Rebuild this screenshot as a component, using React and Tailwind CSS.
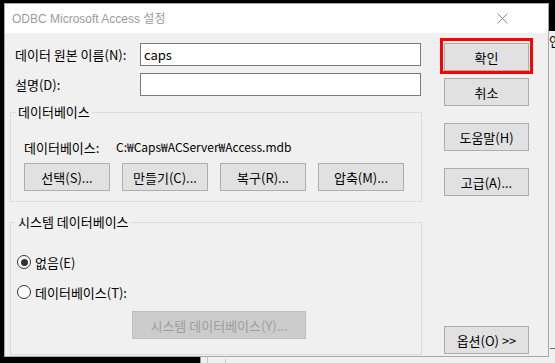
import React from "react";

const font = "font-['Noto_Sans_CJK_KR',sans-serif]";

function Btn({ children, className = "", disabled = false }) {
  return (
    <div
      className={
        "h-[28px] flex items-center justify-center border text-[13px] leading-none " +
        (disabled
          ? "bg-[#cccccc] border-[#bfbfbf] text-[#9d9d9d] "
          : "bg-[#e1e1e1] border-[#adadad] text-black ") +
        className
      }
    >
      {children}
    </div>
  );
}

function Radio({ checked, label }) {
  return (
    <div className="flex items-center gap-[4px] h-[16px]">
      <div className="w-[14px] h-[14px] rounded-full border border-[#333] bg-white flex items-center justify-center">
        {checked && <div className="w-[7px] h-[7px] rounded-full bg-[#333]" />}
      </div>
      <span className="text-[13px] leading-none">{label}</span>
    </div>
  );
}

export default function App() {
  return (
    <div className={"relative w-[555px] h-[363px] bg-black overflow-hidden " + font}>
      {/* background window behind dialog */}
      <div className="absolute left-[200px] top-[31px] right-0 bottom-0 bg-[#f0f0f0] border-l border-[#9a9a9a]">
        <div className="absolute left-[348px] top-[3px] text-[13px] leading-none text-black">연</div>
        <div className="absolute left-[349px] right-0 top-[317px] h-px bg-[#6d6d7a]" />
        <div className="absolute left-[6px] top-[320px] bottom-0 w-px bg-[#c8c8c8]" />
        <div className="absolute left-[24px] top-[328px] bottom-0 w-px bg-[#c8c8c8]" />
      </div>

      {/* dialog */}
      <div className="absolute left-[4px] top-[3px] w-[545px] h-[354px] border border-[#a8a8a8] bg-[#f0f0f0] flex flex-col text-black">
        {/* title bar */}
        <div className="h-[29px] bg-white flex items-center justify-between pl-[7px] pr-[40px] shrink-0">
          <span className="font-['Liberation_Sans','Noto_Sans_CJK_KR',sans-serif] text-[12px] text-[#9b9b9b] leading-none">
            ODBC Microsoft Access 설정
          </span>
          <svg width="11" height="11" viewBox="0 0 11 11" className="text-[#8a8a8a]">
            <path d="M0.5 0.5 L10.5 10.5 M10.5 0.5 L0.5 10.5" stroke="currentColor" strokeWidth="1" />
          </svg>
        </div>

        {/* body */}
        <div className="flex-1 flex pl-[5px] pb-[1px]">
          {/* left column */}
          <div className="w-[412px] flex flex-col pt-[10px]">
            <div className="flex items-center h-[23px]">
              <span className="w-[130px] pl-[5px] text-[13px] leading-none">데이터 원본 이름(N):</span>
              <div className="w-[281px] h-[23px] bg-white border border-[#7a7a7a] flex items-center pl-[3px] text-[13px] leading-none">
                caps
              </div>
            </div>
            <div className="flex items-center h-[23px] mt-[7px]">
              <span className="w-[130px] pl-[5px] text-[13px] leading-none">설명(D):</span>
              <div className="w-[281px] h-[23px] bg-white border border-[#7a7a7a]" />
            </div>

            {/* group box 1 */}
            <div className="relative mt-[16px] h-[90px] border border-[#dcdcdc] pl-[13px] pt-[26px]">
              <span className="absolute left-[5px] top-[-8px] bg-[#f0f0f0] px-[2px] text-[13px] leading-[14px]">
                데이터베이스
              </span>
              <div className="flex items-center h-[16px] text-[13px] leading-none">
                <span className="w-[92px]">데이터베이스:</span>
                <span className="text-[12px]">C:₩Caps₩ACServer₩Access.mdb</span>
              </div>
              <div className="flex gap-[12px] mt-[8px]">
                <Btn className="w-[86px] h-[27px]">선택(S)...</Btn>
                <Btn className="w-[86px] h-[27px]">만들기(C)...</Btn>
                <Btn className="w-[86px] h-[27px]">복구(R)...</Btn>
                <Btn className="w-[86px] h-[27px]">압축(M)...</Btn>
              </div>
            </div>

            {/* group box 2 */}
            <div className="relative mt-[20px] flex-1 border border-[#dcdcdc] pl-[6px] pt-[31px]">
              <span className="absolute left-[5px] top-[-8px] bg-[#f0f0f0] px-[2px] text-[13px] leading-[14px]">
                시스템 데이터베이스
              </span>
              <Radio checked label="없음(E)" />
              <div className="mt-[14px]">
                <Radio label="데이터베이스(T):" />
              </div>
              <div className="pl-[115px] mt-[11px]">
                <Btn disabled className="w-[174px] h-[28px]">시스템 데이터베이스(Y)...</Btn>
              </div>
            </div>
          </div>

          {/* right column */}
          <div className="ml-[22px] w-[85px] flex flex-col pt-[10px] pb-[1px]">
            <div className="relative">
              <div className="absolute left-[-4px] top-[-5px] w-[93px] h-[36px] border-[3px] border-[#ff0000]" />
              <Btn className="w-[85px] h-[27px] relative">확인</Btn>
            </div>
            <Btn className="w-[85px] mt-[7px]">취소</Btn>
            <Btn className="w-[85px] mt-[17px]">도움말(H)</Btn>
            <Btn className="w-[85px] mt-[17px]">고급(A)...</Btn>
            <Btn className="w-[85px] mt-auto">옵션(O) &gt;&gt;</Btn>
          </div>
        </div>
      </div>
    </div>
  );
}
